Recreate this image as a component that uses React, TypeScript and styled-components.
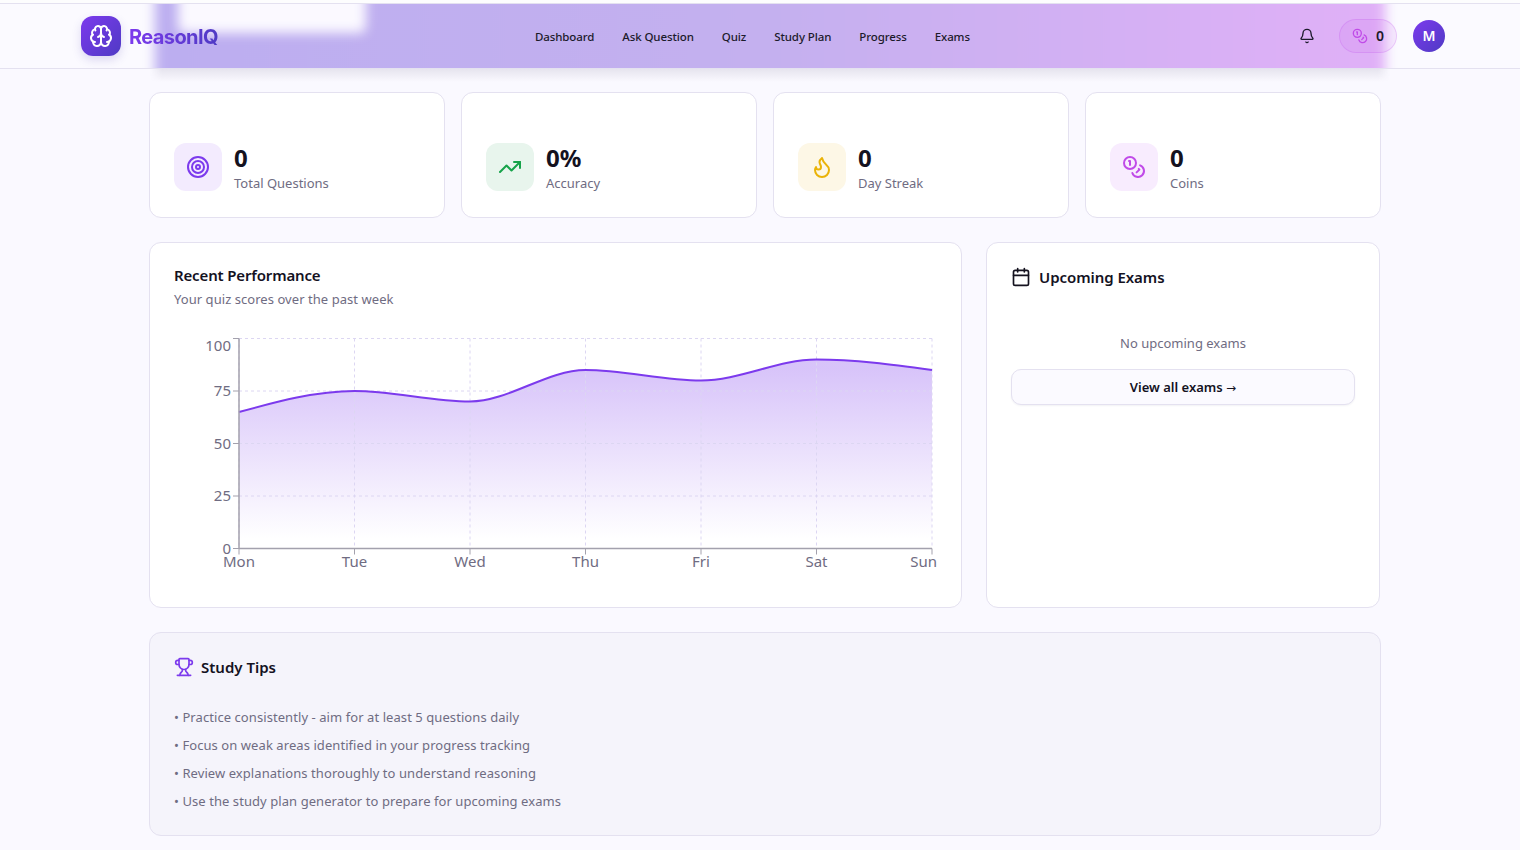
import React from "react";
import styled, { createGlobalStyle } from "styled-components";
import { Bell, Brain, Calendar, Coins, Flame, Target, TrendingUp, Trophy } from "lucide-react";

const Global = createGlobalStyle`
  html, body { margin: 0; padding: 0; background: #faf9ff; }
  body { font-family: "Noto Sans", Inter, sans-serif; color: #14121f; height: 850px; overflow: hidden; }
  * { box-sizing: border-box; }
`;

const TopStrip = styled.div`
  height: 4px;
  background: #fdfdfe;
  border-bottom: 1px solid #e4e1f0;
`;
const HeaderWrap = styled.div`
  position: relative;
`;
const Header = styled.header`
  position: relative;
  height: 65px;
  display: flex;
  align-items: center;
  padding: 0 75px 1px 81px;
  background: #fbfaff;
  border-bottom: 1px solid #e4e1f0;
  overflow: hidden;
`;
const Band = styled.div`
  position: absolute;
  left: 155px;
  width: 1230px;
  top: -20px;
  height: 100px;
  background: linear-gradient(90deg, #bcaef0 0%, #c4b0ef 50%, #dcb0f6 92%, #e0b0f7 100%);
  filter: blur(6px);
`;
const BlurPatch = styled.div`
  position: absolute;
  left: 178px;
  top: -14px;
  width: 188px;
  height: 43px;
  border-radius: 6px;
  background: #fbf9ff;
  filter: blur(6px);
`;
const BandShadow = styled.div`
  position: absolute;
  left: 150px;
  width: 1240px;
  top: 100%;
  height: 13px;
  background: linear-gradient(180deg, rgba(60, 50, 90, 0.1), rgba(60, 50, 90, 0));
  mask-image: linear-gradient(90deg, transparent, #000 12px, #000 calc(100% - 12px), transparent);
`;
const Brand = styled.div`
  position: relative;
  display: flex;
  align-items: center;
  gap: 8px;
`;
const LogoBox = styled.div`
  width: 40px;
  height: 40px;
  border-radius: 12px;
  background: linear-gradient(135deg, #7c3aed, #4f3ac4);
  color: #fff;
  display: flex;
  align-items: center;
  justify-content: center;
  box-shadow: 0 4px 10px rgba(80, 60, 180, 0.18);
`;
const LogoText = styled.span`
  font-family: Inter, sans-serif;
  font-size: 20px;
  font-weight: 700;
  letter-spacing: -0.6px;
  position: relative;
  top: 1px;
  background: linear-gradient(90deg, #7c3aed, #4f3ac4);
  -webkit-background-clip: text;
  background-clip: text;
  color: transparent;
`;
const Nav = styled.nav`
  position: relative;
  top: 1px;
  display: flex;
  gap: 28px;
  margin-left: 317px;
`;
const NavItem = styled.a`
  font-size: 11.5px;
  font-weight: 500;
  letter-spacing: -0.1px;
  color: #1c1a2b;
`;
const RightSide = styled.div`
  position: relative;
  margin-left: auto;
  display: flex;
  align-items: center;
`;
const BellWrap = styled.div`
  display: flex;
  color: #1c1a2b;
  margin-right: 24px;
`;
const CoinPill = styled.div`
  width: 58px;
  height: 34px;
  border-radius: 17px;
  border: 1px solid rgba(192, 80, 235, 0.22);
  background: rgba(192, 80, 235, 0.1);
  color: #c04be8;
  display: flex;
  align-items: center;
  justify-content: center;
  gap: 8px;
  margin-right: 16px;
`;
const CoinCount = styled.span`
  font-size: 14px;
  font-weight: 600;
  color: #1c1a2b;
`;
const Avatar = styled.div`
  width: 32px;
  height: 32px;
  border-radius: 50%;
  background: linear-gradient(135deg, #7c3aed, #4f3ac4);
  color: #fff;
  font-size: 14px;
  font-weight: 600;
  display: flex;
  align-items: center;
  justify-content: center;
`;

const Main = styled.main`
  width: 1232px;
  margin-left: 149px;
  padding-top: 23px;
  display: flex;
  flex-direction: column;
  gap: 24px;
`;
const StatGrid = styled.div`
  display: grid;
  grid-template-columns: repeat(4, 1fr);
  gap: 16px;
`;
const Card = styled.section`
  background: #fff;
  border: 1px solid #e4e1f0;
  border-radius: 12px;
`;
const StatCard = styled(Card)`
  height: 126px;
  padding: 50px 24px 0;
  display: flex;
  gap: 12px;
`;
const StatIcon = styled.div<{ $bg: string; $fg: string }>`
  width: 48px;
  height: 48px;
  border-radius: 12px;
  background: ${(p) => p.$bg};
  color: ${(p) => p.$fg};
  display: flex;
  align-items: center;
  justify-content: center;
`;
const StatValue = styled.div`
  font-size: 24px;
  font-weight: 700;
  line-height: 30px;
  margin-bottom: 2px;
`;
const StatLabel = styled.div`
  font-size: 13px;
  line-height: 16px;
  color: #6f6c82;
`;
const MiddleRow = styled.div`
  display: flex;
  gap: 24px;
  height: 366px;
`;
const ChartCard = styled(Card)`
  width: 813px;
  padding: 22px 24px 0;
`;
const CardTitle = styled.h3`
  margin: 0;
  font-size: 15px;
  font-weight: 600;
  letter-spacing: -0.15px;
  line-height: 20px;
`;
const CardSub = styled.p`
  margin: 4px 0 0;
  font-size: 13px;
  letter-spacing: 0.05px;
  line-height: 20px;
  color: #6f6c82;
`;
const ChartSvg = styled.svg`
  display: block;
  margin: 11px 0 0 -25px;
`;
const ExamCard = styled(Card)`
  width: 394px;
  padding: 24px;
`;
const IconTitle = styled.div`
  display: flex;
  align-items: center;
  gap: 8px;
`;
const ExamTitle = styled(CardTitle)`
  letter-spacing: -0.05px;
`;
const ExamEmpty = styled.p`
  margin: 46px 0 0;
  text-align: center;
  font-size: 13px;
  line-height: 20px;
  color: #6f6c82;
`;
const OutlineBtn = styled.button`
  display: block;
  width: 344px;
  height: 36px;
  margin: 16px 0 0;
  border: 1px solid #e4e1f0;
  border-radius: 10px;
  background: #fbfaff;
  font: 600 13px "Noto Sans", sans-serif;
  color: #14121f;
  box-shadow: 0 1px 2px rgba(40, 30, 80, 0.06);
`;
const ArrowGlyph = styled.span`
  font-family: "DejaVu Sans", sans-serif;
  font-size: 12px;
  font-weight: 400;
`;
const TipsCard = styled(Card)`
  height: 204px;
  background: #f5f4fb;
  padding: 24px;
  color: #7c3aed;
`;
const TipsList = styled.ul`
  list-style: none;
  margin: 30px 0 0;
  padding: 0;
  display: flex;
  flex-direction: column;
  gap: 8px;
`;
const Tip = styled.li`
  font-size: 13px;
  letter-spacing: 0.07px;
  line-height: 20px;
  color: #6f6c82;
`;
const TipsTitle = styled(CardTitle)`
  color: #14121f;
  letter-spacing: 0;
  margin-left: -1px;
`;

const data = [65, 75, 70, 85, 80, 90, 85];
const days = ["Mon", "Tue", "Wed", "Thu", "Fri", "Sat", "Sun"];
const X0 = 90, X1 = 783, Y0 = 228.5, Y100 = 18.5;
const px = (i: number) => X0 + ((X1 - X0) * i) / 6;
const py = (v: number) => Y0 - ((Y0 - Y100) * v) / 100;

function monotonePath(pts: [number, number][]) {
  const n = pts.length;
  const sign = (v: number) => (v < 0 ? -1 : 1);
  const d: number[] = [];
  const s: number[] = [];
  for (let i = 0; i < n - 1; i++) s.push((pts[i + 1][1] - pts[i][1]) / (pts[i + 1][0] - pts[i][0]));
  for (let i = 1; i < n - 1; i++) {
    const h0 = pts[i][0] - pts[i - 1][0];
    const h1 = pts[i + 1][0] - pts[i][0];
    const p = (s[i - 1] * h1 + s[i] * h0) / (h0 + h1);
    d[i] = (sign(s[i - 1]) + sign(s[i])) * Math.min(Math.abs(s[i - 1]), Math.abs(s[i]), 0.5 * Math.abs(p)) || 0;
  }
  d[0] = (3 * s[0] - d[1]) / 2;
  d[n - 1] = (3 * s[n - 2] - d[n - 2]) / 2;
  let out = `M${pts[0][0]},${pts[0][1]}`;
  for (let i = 0; i < n - 1; i++) {
    const h = (pts[i + 1][0] - pts[i][0]) / 3;
    out += `C${pts[i][0] + h},${pts[i][1] + h * d[i]} ${pts[i + 1][0] - h},${pts[i + 1][1] - h * d[i + 1]} ${pts[i + 1][0]},${pts[i + 1][1]}`;
  }
  return out;
}

function PerformanceChart() {
  const line = monotonePath(data.map((v, i) => [px(i), py(v)] as [number, number]));
  const area = `${line}L${X1},${Y0}L${X0},${Y0}Z`;
  const tick = { fontFamily: "'Noto Sans', sans-serif", fontSize: 15, fill: "#6f6c82" };
  return (
    <ChartSvg width="811" height="250" viewBox="0 0 811 250">
      <defs>
        <linearGradient id="fillArea" x1="0" y1="0" x2="0" y2="1">
          <stop offset="5%" stopColor="#7c3aed" stopOpacity="0.3" />
          <stop offset="95%" stopColor="#7c3aed" stopOpacity="0" />
        </linearGradient>
      </defs>
      <path d={area} fill="url(#fillArea)" />
      <g stroke="#dcd6f2" strokeDasharray="3 3" strokeWidth="1" fill="none">
        {[100, 75, 50, 25].map((v) => (
          <line key={v} x1={X0} x2={X1} y1={py(v)} y2={py(v)} />
        ))}
        {days.map((d, i) => (
          <line key={d} x1={px(i)} x2={px(i)} y1={Y100} y2={Y0} />
        ))}
      </g>
      <path d={line} fill="none" stroke="#7c3aed" strokeWidth="2" />
      <g stroke="#a3a1ad" strokeWidth="1" fill="none">
        <line x1={X0} x2={X0} y1={Y100} y2={Y0} strokeWidth="1.5" />
        <line x1={X0} x2={X1} y1={Y0} y2={Y0} strokeWidth="1.5" />
        {[100, 75, 50, 25, 0].map((v) => (
          <line key={v} x1={X0 - 6} x2={X0} y1={py(v)} y2={py(v)} />
        ))}
        {days.map((d, i) => (
          <line key={d} x1={px(i)} x2={px(i)} y1={Y0} y2={Y0 + 6} />
        ))}
      </g>
      {[100, 75, 50, 25, 0].map((v) => (
        <text key={v} x={X0 - 8} y={v === 100 ? 31 : v === 0 ? 234 : py(v) + 5} textAnchor="end" {...tick}>
          {v}
        </text>
      ))}
      {days.map((d, i) => (
        <text key={d} x={i === 6 ? px(i) + 5 : px(i)} y={247} textAnchor={i === 6 ? "end" : "middle"} {...tick}>
          {d}
        </text>
      ))}
    </ChartSvg>
  );
}

const stats = [
  { v: "0", l: "Total Questions", bg: "#f3ebfe", fg: "#7c3aed", I: Target },
  { v: "0%", l: "Accuracy", bg: "#e8f5ed", fg: "#16a34a", I: TrendingUp },
  { v: "0", l: "Day Streak", bg: "#fdf7e6", fg: "#eab308", I: Flame },
  { v: "0", l: "Coins", bg: "#f8ecfe", fg: "#c04be8", I: Coins },
];
const navItems = ["Dashboard", "Ask Question", "Quiz", "Study Plan", "Progress", "Exams"];
const tips = [
  "Practice consistently - aim for at least 5 questions daily",
  "Focus on weak areas identified in your progress tracking",
  "Review explanations thoroughly to understand reasoning",
  "Use the study plan generator to prepare for upcoming exams",
];

export default function App() {
  return (
    <>
      <Global />
      <TopStrip />
      <HeaderWrap>
        <Header>
          <Band />
          <BlurPatch />
          <Brand>
            <LogoBox><Brain size={24} /></LogoBox>
            <LogoText>ReasonIQ</LogoText>
          </Brand>
          <Nav>
            {navItems.map((n) => <NavItem key={n}>{n}</NavItem>)}
          </Nav>
          <RightSide>
            <BellWrap><Bell size={16} /></BellWrap>
            <CoinPill><Coins size={16} /><CoinCount>0</CoinCount></CoinPill>
            <Avatar>M</Avatar>
          </RightSide>
        </Header>
        <BandShadow />
      </HeaderWrap>
      <Main>
        <StatGrid>
          {stats.map(({ v, l, bg, fg, I }) => (
            <StatCard key={l}>
              <StatIcon $bg={bg} $fg={fg}><I size={24} /></StatIcon>
              <div>
                <StatValue>{v}</StatValue>
                <StatLabel>{l}</StatLabel>
              </div>
            </StatCard>
          ))}
        </StatGrid>
        <MiddleRow>
          <ChartCard>
            <CardTitle>Recent Performance</CardTitle>
            <CardSub>Your quiz scores over the past week</CardSub>
            <PerformanceChart />
          </ChartCard>
          <ExamCard>
            <IconTitle>
              <Calendar size={20} />
              <ExamTitle>Upcoming Exams</ExamTitle>
            </IconTitle>
            <ExamEmpty>No upcoming exams</ExamEmpty>
            <OutlineBtn>View all exams <ArrowGlyph>→</ArrowGlyph></OutlineBtn>
          </ExamCard>
        </MiddleRow>
        <TipsCard>
          <IconTitle>
            <Trophy size={20} />
            <TipsTitle>Study Tips</TipsTitle>
          </IconTitle>
          <TipsList>
            {tips.map((t) => <Tip key={t}>• {t}</Tip>)}
          </TipsList>
        </TipsCard>
      </Main>
    </>
  );
}
